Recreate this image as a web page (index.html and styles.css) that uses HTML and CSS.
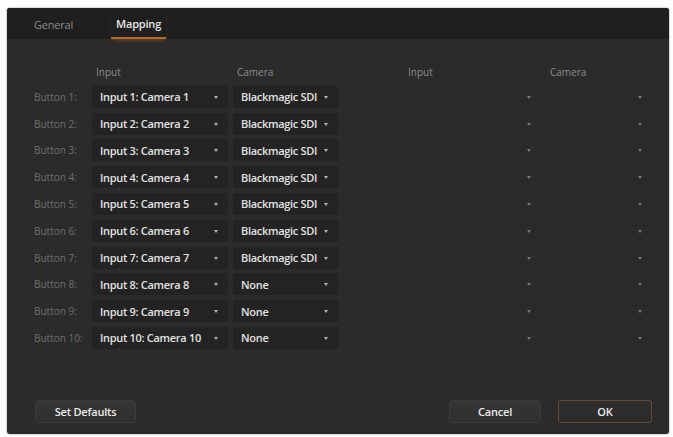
FILE: index.html
```html
<!DOCTYPE html>
<html lang="en">
  <head>
    <meta charset="UTF-8" />
    <title>Settings - Mapping</title>
    <link rel="stylesheet" href="styles.css">
  </head>
  <body>
    <div class="dialog">
      <!-- tab bar -->
      <div class="tabs">
        <span class="tab">General</span>
        <span class="tab active">Mapping</span>
      </div>

      <div class="content">
        <div class="grid">
          <span></span>
          <span class="head">Input</span>
          <span class="head">Camera</span>
          <span></span>
          <span class="head">Input</span>
          <span class="head">Camera</span>

          <span class="label">Button 1:</span>
          <div class="select">Input 1: Camera 1<i class="arrow"></i></div>
          <div class="select">Blackmagic SDI<i class="arrow"></i></div>
          <span></span>
          <div class="select empty"><i class="arrow"></i></div>
          <div class="select empty"><i class="arrow"></i></div>

          <span class="label">Button 2:</span>
          <div class="select">Input 2: Camera 2<i class="arrow"></i></div>
          <div class="select">Blackmagic SDI<i class="arrow"></i></div>
          <span></span>
          <div class="select empty"><i class="arrow"></i></div>
          <div class="select empty"><i class="arrow"></i></div>

          <span class="label">Button 3:</span>
          <div class="select">Input 3: Camera 3<i class="arrow"></i></div>
          <div class="select">Blackmagic SDI<i class="arrow"></i></div>
          <span></span>
          <div class="select empty"><i class="arrow"></i></div>
          <div class="select empty"><i class="arrow"></i></div>

          <span class="label">Button 4:</span>
          <div class="select">Input 4: Camera 4<i class="arrow"></i></div>
          <div class="select">Blackmagic SDI<i class="arrow"></i></div>
          <span></span>
          <div class="select empty"><i class="arrow"></i></div>
          <div class="select empty"><i class="arrow"></i></div>

          <span class="label">Button 5:</span>
          <div class="select">Input 5: Camera 5<i class="arrow"></i></div>
          <div class="select">Blackmagic SDI<i class="arrow"></i></div>
          <span></span>
          <div class="select empty"><i class="arrow"></i></div>
          <div class="select empty"><i class="arrow"></i></div>

          <span class="label">Button 6:</span>
          <div class="select">Input 6: Camera 6<i class="arrow"></i></div>
          <div class="select">Blackmagic SDI<i class="arrow"></i></div>
          <span></span>
          <div class="select empty"><i class="arrow"></i></div>
          <div class="select empty"><i class="arrow"></i></div>

          <span class="label">Button 7:</span>
          <div class="select">Input 7: Camera 7<i class="arrow"></i></div>
          <div class="select">Blackmagic SDI<i class="arrow"></i></div>
          <span></span>
          <div class="select empty"><i class="arrow"></i></div>
          <div class="select empty"><i class="arrow"></i></div>

          <span class="label">Button 8:</span>
          <div class="select">Input 8: Camera 8<i class="arrow"></i></div>
          <div class="select">None<i class="arrow"></i></div>
          <span></span>
          <div class="select empty"><i class="arrow"></i></div>
          <div class="select empty"><i class="arrow"></i></div>

          <span class="label">Button 9:</span>
          <div class="select">Input 9: Camera 9<i class="arrow"></i></div>
          <div class="select">None<i class="arrow"></i></div>
          <span></span>
          <div class="select empty"><i class="arrow"></i></div>
          <div class="select empty"><i class="arrow"></i></div>

          <span class="label">Button 10:</span>
          <div class="select">Input 10: Camera 10<i class="arrow"></i></div>
          <div class="select">None<i class="arrow"></i></div>
          <span></span>
          <div class="select empty"><i class="arrow"></i></div>
          <div class="select empty"><i class="arrow"></i></div>
        </div>

        <!-- footer buttons -->
        <div class="footer">
          <button class="btn defaults">Set Defaults</button>
          <div class="right">
            <button class="btn cancel">Cancel</button>
            <button class="btn ok">OK</button>
          </div>
        </div>
      </div>
    </div>
  </body>
</html>
```

FILE: styles.css
```css
/* white page around the dialog */
body {
  margin: 0;
  padding: 8px 4px 3px 7px;
  background: #fdfdfd;
  font-family: "Open Sans", "Liberation Sans", sans-serif;
}

/* the dialog window */
.dialog {
  width: 662px;
  height: 426px;
  background: #2b2b2b;
  border-radius: 3px;
  box-shadow: 0 0 2px rgba(0, 0, 0, 0.5);
  display: flex;
  flex-direction: column;
  overflow: hidden;
}

/* tabs on top */
.tabs {
  height: 31px;
  background: #1f1f1f;
  display: flex;
  align-items: stretch;
  padding-left: 27px;
  gap: 43px;
}

.tab {
  font-size: 11px;
  color: #8a8a8a;
  display: flex;
  align-items: center;
  padding: 2px 0 0 0;
  letter-spacing: -0.2px;
}

.tab.active {
  color: #e6e6e6;
  font-weight: 600;
  padding: 2px 5px 0 5px;
  margin-left: -5px;
  border-bottom: 2px solid #b86a22;
  box-shadow: 0 3px 4px -2px rgba(200, 110, 30, 0.5);
}

.content {
  flex: 1;
  display: flex;
  flex-direction: column;
  padding: 24px 0 11px 27px;
}

/* mapping table */
.grid {
  display: grid;
  grid-template-columns: 53px 136px 105px 56px 137px 106px;
  grid-template-rows: 18px;
  grid-auto-rows: 22px;
  column-gap: 5px;
  row-gap: 4.8px;
}

.head {
  font-size: 10px;
  color: #8c8c8c;
  padding-left: 4px;
  align-self: start;
  margin-top: 2px;
}

.label {
  font-size: 10px;
  color: #6f6f6f;
  display: flex;
  align-items: center;
  white-space: nowrap;
}

.select {
  position: relative;
  background: #232323;
  border-radius: 2px;
  font-size: 11px;
  font-weight: 600;
  color: #e2e2e2;
  display: flex;
  align-items: center;
  padding-left: 8px;
  letter-spacing: -0.3px;
  white-space: nowrap;
}

.select.empty {
  background: #2a2a2a;
}

/* small dropdown triangle */
.arrow {
  position: absolute;
  right: 10px;
  top: 10px;
  width: 0;
  height: 0;
  border-left: 2.5px solid transparent;
  border-right: 2.5px solid transparent;
  border-top: 3px solid #b5b5b5;
}

.select.empty .arrow {
  border-top-color: #7a7a7a;
}

/* bottom buttons */
.footer {
  margin-top: auto;
  display: flex;
  justify-content: space-between;
  align-items: center;
  padding-right: 17px;
}

.right {
  display: flex;
  gap: 17px;
}

.btn {
  font-family: "Open Sans", "Liberation Sans", sans-serif;
  font-size: 11px;
  font-weight: 600;
  color: #ececec;
  height: 23px;
  background: linear-gradient(#363636, #2f2f2f);
  border: 1px solid #3b3b3b;
  border-radius: 3px;
  letter-spacing: -0.2px;
}

.defaults {
  width: 101px;
  margin-left: 1px;
}

.cancel {
  width: 92px;
}

.ok {
  width: 94px;
  border-color: #6a4a2c;
  background: linear-gradient(#2f2f2f, #2a2a2a);
}
```
